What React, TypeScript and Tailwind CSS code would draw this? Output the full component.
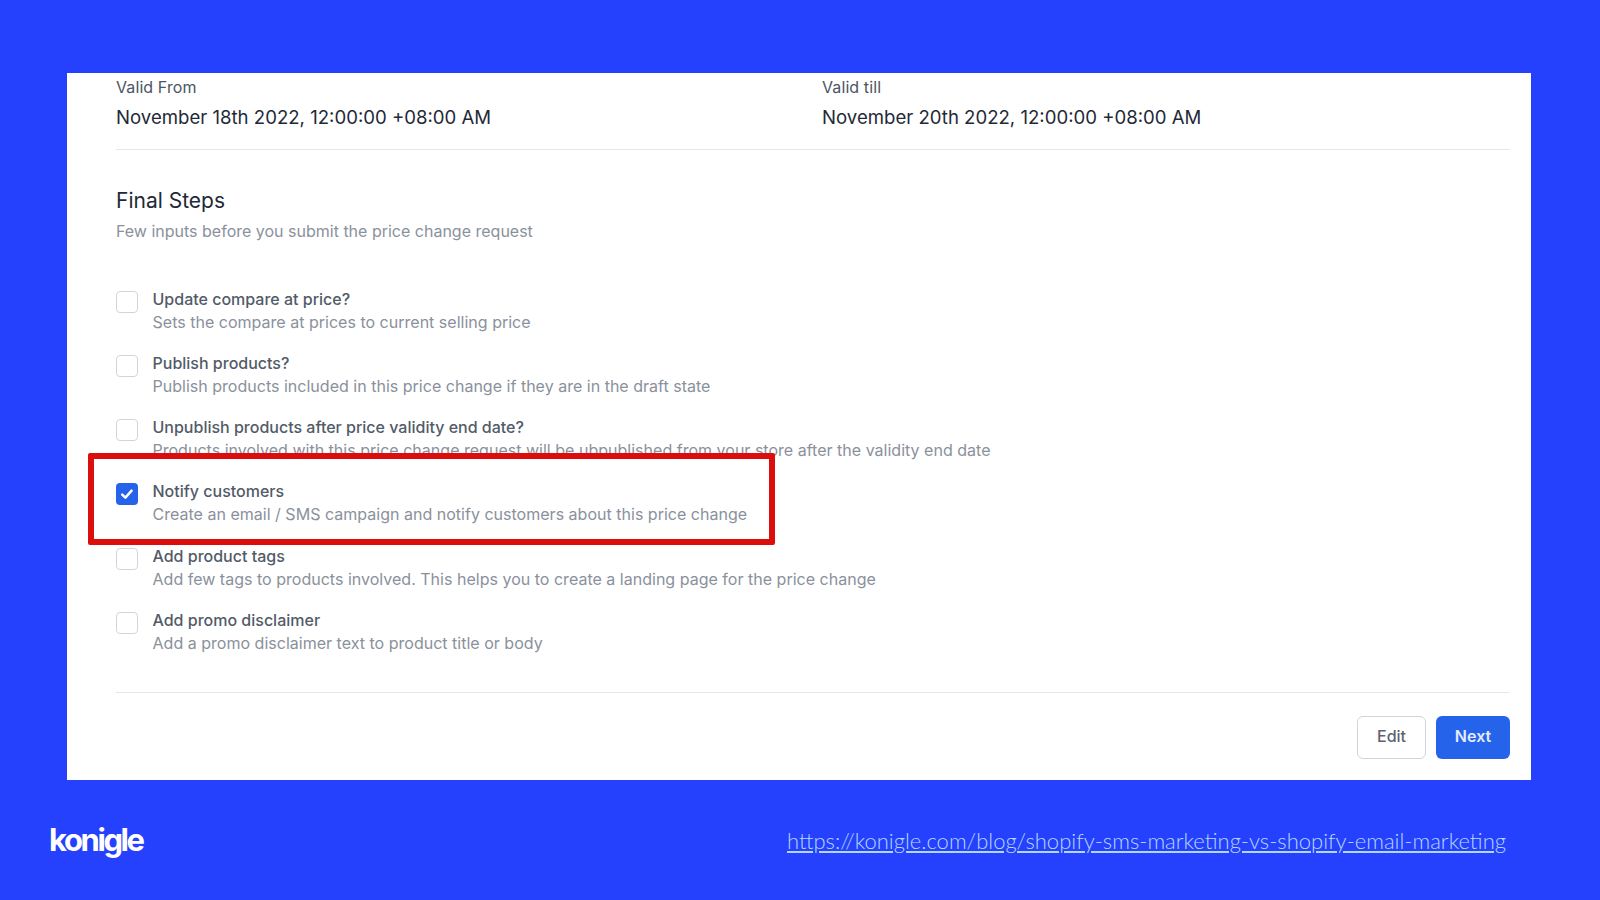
const steps = [
  { title: 'Update compare at price?', desc: 'Sets the compare at prices to current selling price' },
  { title: 'Publish products?', desc: 'Publish products included in this price change if they are in the draft state' },
  { title: 'Unpublish products after price validity end date?', desc: 'Products involved with this price change request will be ubpublished from your store after the validity end date' },
  { title: 'Notify customers', desc: 'Create an email / SMS campaign and notify customers about this price change', checked: true },
  { title: 'Add product tags', desc: 'Add few tags to products involved. This helps you to create a landing page for the price change' },
  { title: 'Add promo disclaimer', desc: 'Add a promo disclaimer text to product title or body' },
]

function Step({ title, desc, checked }: { title: string; desc: string; checked?: boolean }) {
  return (
    <div className="relative h-[64.2px] flex items-start gap-[14.5px]">
      {checked && (
        <div className="absolute left-[-28px] top-[-27.4px] w-[687px] h-[92px] border-[6px] border-[#dc0d0d] rounded-[2px] bg-white" />
      )}
      {checked ? (
        <div className="relative mt-[3px] w-[22px] h-[22px] rounded-[4px] bg-[#2563eb] flex items-center justify-center shrink-0">
          <svg width="16" height="16" viewBox="0 0 16 16" fill="none">
            <path d="M3.2 8.6L6.4 11.6L12.6 4.6" stroke="white" strokeWidth="2.5" strokeLinecap="round" strokeLinejoin="round" />
          </svg>
        </div>
      ) : (
        <div className="relative mt-[3px] w-[22px] h-[22px] rounded-[4px] border border-[#d1d5db] bg-white shrink-0" />
      )}
      <div className="relative">
        <div className="text-[16px] leading-[23px] font-medium text-[#525b68]">{title}</div>
        <div className="text-[16.05px] leading-[23px] text-[#8a919c] whitespace-nowrap">{desc}</div>
      </div>
    </div>
  )
}

export default function App() {
  return (
    <div className="w-[1600px] h-[900px] overflow-hidden bg-[#2541fd] pt-[73px] font-['Inter',sans-serif]">
      <div className="ml-[67px] w-[1464px] h-[707px] bg-white pl-[49px] pr-[21px] flex flex-col">
        <div className="flex pt-[2px] h-[77px] border-b border-[#e5e7eb] shrink-0">
          <div className="w-[706px]">
            <div className="text-[16px] leading-[24px] tracking-[0.1px] text-[#4b5563]">Valid From</div>
            <div className="mt-[1px] text-[18.6px] leading-[35px] text-[#1f2937]">November 18th 2022, 12:00:00 +08:00 AM</div>
          </div>
          <div>
            <div className="text-[16px] leading-[24px] tracking-[0.1px] text-[#4b5563]">Valid till</div>
            <div className="mt-[1px] text-[18.6px] leading-[35px] text-[#1f2937]">November 20th 2022, 12:00:00 +08:00 AM</div>
          </div>
        </div>
        <div className="mt-[37px] text-[21px] leading-[28px] text-[#1f2937]">Final Steps</div>
        <div className="mt-[4px] text-[16px] leading-[24px] text-[#8a919c]">Few inputs before you submit the price change request</div>
        <div className="mt-[44.8px]">
          {steps.map((s) => (
            <Step key={s.title} title={s.title} desc={s.desc} checked={s.checked} />
          ))}
        </div>
        <div className="mt-[19px] border-t border-[#e5e7eb] pt-[23px] flex justify-end gap-[10px]">
          <button className="w-[69px] h-[43px] pb-[2px] rounded-[6px] border border-[#d1d5db] bg-white text-[16px] font-medium text-[#5b6470]">Edit</button>
          <button className="w-[74px] h-[43px] pb-[2px] rounded-[6px] bg-[#2563eb] text-[16px] font-semibold text-[#e3edff]">Next</button>
        </div>
      </div>
      <div className="flex items-center justify-between pl-[49px] pr-[94px] h-[120px]">
        <div className="font-bold text-[31px] leading-[40px] tracking-[-2.4px] text-white">konigle</div>
        <a className="mt-[2px] font-['Lato',sans-serif] font-light text-[22px] leading-[30px] text-[#b4d7ff] underline">https://konigle.com/blog/shopify-sms-marketing-vs-shopify-email-marketing</a>
      </div>
    </div>
  )
}
